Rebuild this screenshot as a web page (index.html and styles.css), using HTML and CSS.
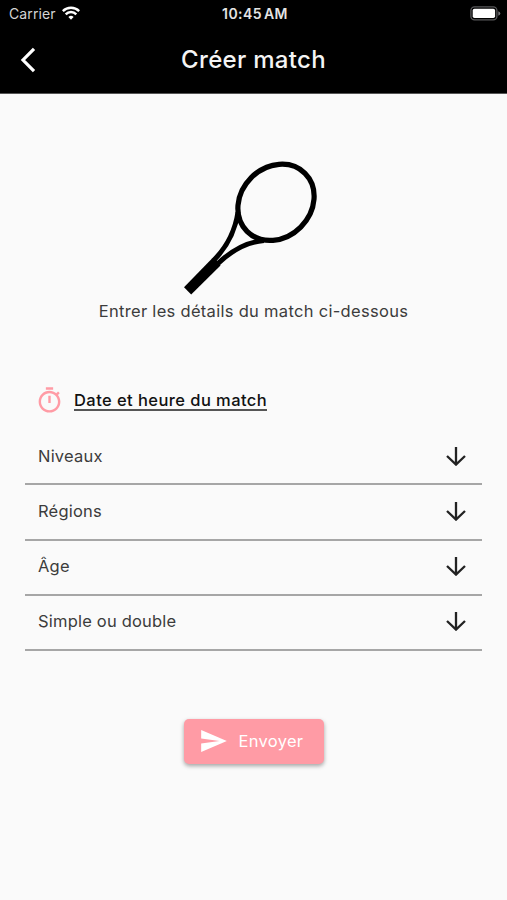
FILE: index.html
```html
<!DOCTYPE html>
<html lang="fr">

<head>
    <meta charset="UTF-8">
    <meta name="viewport" content="width=device-width, initial-scale=1.0">
    <title>Créer match</title>
    <link rel="stylesheet" href="styles.css">
</head>

<body>
    <header class="header">
        <div class="status-bar">
            <div class="carrier">
                <span>Carrier</span>
                <svg class="wifi" viewBox="0 0 18 14" fill="none" stroke="#fff" stroke-width="2.5">
                    <path d="M0.8 5.1a11.6 11.6 0 0 1 16.4 0" />
                    <path d="M3.7 8.3a7.5 7.5 0 0 1 10.6 0" />
                    <path d="M9 13.8l-2.6-2.7a3.7 3.7 0 0 1 5.2 0z" fill="#fff" stroke="none" />
                </svg>
            </div>
            <span class="clock">10:45 AM</span>
            <svg class="battery" viewBox="0 0 31 15">
                <rect x="0.9" y="0.9" width="26" height="13" rx="3.6" fill="none" stroke="#58585a" stroke-width="1.3" />
                <rect x="2.7" y="2.7" width="22.4" height="9.4" rx="1.8" fill="#fff" />
                <path d="M28.3 5.2v4.6q2-.8 2-2.3t-2-2.3z" fill="#7a7a7c" />
            </svg>
        </div>
        <div class="nav-bar">
            <svg class="back" viewBox="0 0 16 26" fill="none" stroke="#fff" stroke-width="3.2">
                <path d="M14 1.8L3 13l11 11.2" />
            </svg>
            <h1 class="title">Créer match</h1>
        </div>
    </header>

    <main class="content">
        <svg class="racket" viewBox="0 0 160 150" fill="none" stroke="#000">
            <ellipse cx="106" cy="52.3" rx="41" ry="35" transform="rotate(-45 106 52.3)" stroke-width="5.2" />
            <path d="M68 62C65 82 57 97 43.5 110.5" stroke-width="5" />
            <path d="M94 90.5C76 92 62 100 48 113.5" stroke-width="5" />
            <path d="M14 137.2L42 108.4L47 110.5L50.5 115.4L21.2 144.4z" fill="#000" stroke="none" />
        </svg>
        <p class="intro">Entrer les détails du match ci-dessous</p>

        <div class="date-row">
            <svg class="timer" viewBox="0 0 24 24" fill="#ff9ba5">
                <path d="M15 1H9v2h6V1zm-4 13h2V8h-2v6zm8.03-6.61l1.42-1.42c-.43-.51-.9-.99-1.41-1.41l-1.42 1.42C16.07 4.74 14.12 4 12 4c-4.97 0-9 4.03-9 9s4.02 9 9 9 9-4.03 9-9c0-2.12-.74-4.07-1.97-5.61zM12 20c-3.87 0-7-3.13-7-7s3.13-7 7-7 7 3.13 7 7-3.13 7-7 7z" />
            </svg>
            <a class="date-link">Date et heure du match</a>
        </div>

        <ul class="select-list">
            <li class="select-item">
                <span>Niveaux</span>
                <svg class="arrow" viewBox="0 0 20 20"><path d="M10 1v17.5M1 10l9 8.6 9-8.6" /></svg>
            </li>
            <li class="select-item">
                <span>Régions</span>
                <svg class="arrow" viewBox="0 0 20 20"><path d="M10 1v17.5M1 10l9 8.6 9-8.6" /></svg>
            </li>
            <li class="select-item">
                <span>Âge</span>
                <svg class="arrow" viewBox="0 0 20 20"><path d="M10 1v17.5M1 10l9 8.6 9-8.6" /></svg>
            </li>
            <li class="select-item">
                <span>Simple ou double</span>
                <svg class="arrow" viewBox="0 0 20 20"><path d="M10 1v17.5M1 10l9 8.6 9-8.6" /></svg>
            </li>
        </ul>

        <button class="send-btn">
            <svg class="send-icon" viewBox="2 3 21 18" fill="#fff">
                <path d="M2.01 21L23 12 2.01 3 2 10l15 2-15 2z" />
            </svg>
            <span>Envoyer</span>
        </button>
    </main>
</body>

</html>
```
FILE: styles.css
```css
* {
    box-sizing: border-box;
    margin: 0;
    padding: 0;
}

body {
    font-family: Inter, "Liberation Sans", sans-serif;
    background-color: #fafafa;
    color: #3c3c3c;
    min-height: 100vh;
}

svg {
    display: block;
    flex-shrink: 0;
}

/* Header */
.header {
    height: 94px;
    background-color: #000;
    border-bottom: 1px solid #555;
    color: #fff;
}

.status-bar {
    display: grid;
    grid-template-columns: 1fr auto 1fr;
    align-items: center;
    height: 27px;
    padding: 0 6px 0 9px;
}

.carrier {
    display: flex;
    align-items: center;
    gap: 6px;
    font-size: 14px;
    letter-spacing: 0.1px;
    color: #d4d4d4;
}

.wifi {
    width: 18px;
    height: 14px;
    margin-top: -2px;
}

.clock {
    font-size: 14px;
    font-weight: 600;
    letter-spacing: 0.4px;
    word-spacing: -1.8px;
    color: #e4e4e4;
}

.battery {
    width: 31px;
    height: 15px;
    justify-self: end;
}

.nav-bar {
    display: grid;
    grid-template-columns: 1fr auto 1fr;
    align-items: center;
    height: 65px;
    padding: 0 20px;
}

.back {
    width: 16px;
    height: 26px;
}

.title {
    font-size: 24px;
    font-weight: 500;
    letter-spacing: 0.3px;
    color: #f4f4f4;
}

/* Form */
.content {
    display: flex;
    flex-direction: column;
    align-items: center;
    padding: 56px 25px 0;
}

.racket {
    width: 160px;
    height: 150px;
    margin-right: 7px;
}

.intro {
    margin-top: -1px;
    font-size: 16.5px;
    line-height: 24px;
    letter-spacing: 0.3px;
}

.date-row {
    display: flex;
    align-items: center;
    align-self: stretch;
    gap: 10px;
    height: 30px;
    margin-top: 62px;
    padding-left: 10px;
}

.timer {
    width: 29px;
    height: 29px;
}

.date-link {
    margin-top: 2px;
    border-bottom: 2px solid #555;
    color: #111;
    font-size: 16.5px;
    font-weight: 500;
    line-height: 18px;
    letter-spacing: 0.43px;
}

.select-list {
    align-self: stretch;
    margin-top: 15px;
    list-style-type: none;
}

.select-item {
    display: flex;
    justify-content: space-between;
    align-items: center;
    height: 55.25px;
    padding: 0 16px 2px 13px;
    border-bottom: 2px solid #a6a6a6;
    font-size: 16.5px;
    letter-spacing: 0.2px;
}

.arrow {
    width: 20px;
    height: 20px;
    fill: none;
    stroke: #222;
    stroke-width: 2.3;
}

.send-btn {
    display: flex;
    align-items: center;
    gap: 12px;
    width: 140px;
    height: 45px;
    margin-top: 68px;
    padding: 0 0 2px 17px;
    border: none;
    border-radius: 5px;
    background-color: #ff9ba5;
    box-shadow: 0 2px 4px rgba(0, 0, 0, 0.35);
    color: #fff;
    font-family: inherit;
    font-size: 16.5px;
    letter-spacing: 0.3px;
}

.send-icon {
    width: 26px;
    height: 22px;
}
```
